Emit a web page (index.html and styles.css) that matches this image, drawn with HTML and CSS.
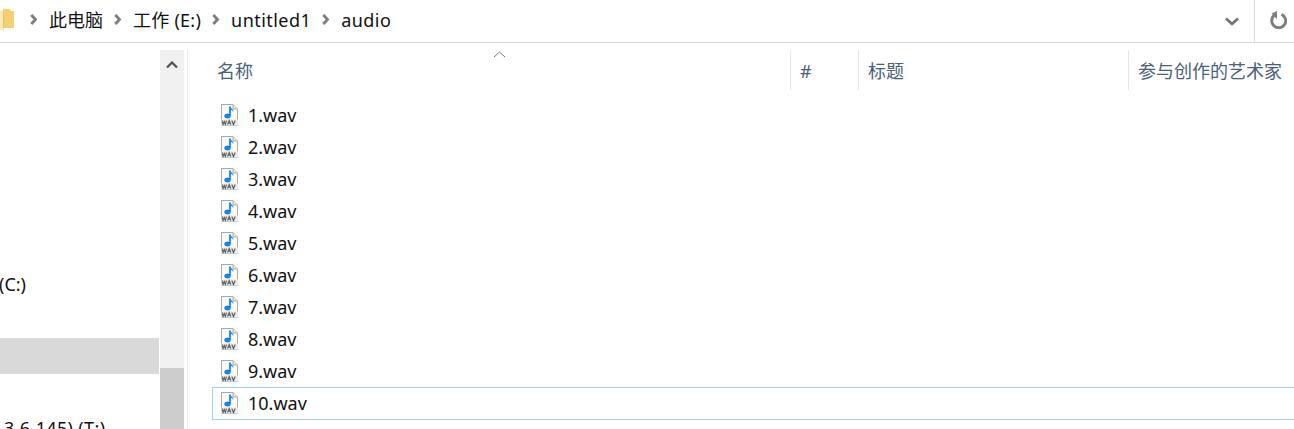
FILE: index.html
```html
<!DOCTYPE html>
<html lang="zh">
<head>
<meta charset="utf-8">
<title>audio</title>
<link rel="stylesheet" href="styles.css">
</head>
<body>
<div class="window">
  <header class="addressbar">
    <svg class="folder" width="15" height="24" viewBox="0 0 15 24"><path d="M3 1h7l1 2h3v17H3z" fill="#f4d072"/><path d="M0 1.500l4 1.500v20l-4-1z" fill="#fdebb5"/><path d="M4 3l-1 .5V20h1z" fill="#e9c261"/></svg>
    <nav class="crumbs">
      <svg class="sep" width="8" height="11" viewBox="0 0 8 11"><path d="M1.300 1l4.200 4.500-4.200 4.500" fill="none" stroke="#7d7d7d" stroke-width="2.800"/></svg>
      <span class="crumb">此电脑</span>
      <svg class="sep" width="8" height="11" viewBox="0 0 8 11"><path d="M1.300 1l4.200 4.500-4.200 4.500" fill="none" stroke="#7d7d7d" stroke-width="2.800"/></svg>
      <span class="crumb crumb-drive">工作 (E:)</span>
      <svg class="sep" width="8" height="11" viewBox="0 0 8 11"><path d="M1.300 1l4.200 4.500-4.200 4.500" fill="none" stroke="#7d7d7d" stroke-width="2.800"/></svg>
      <span class="crumb crumb-latin">untitled1</span>
      <svg class="sep" width="8" height="11" viewBox="0 0 8 11"><path d="M1.300 1l4.200 4.500-4.200 4.500" fill="none" stroke="#7d7d7d" stroke-width="2.800"/></svg>
      <span class="crumb crumb-latin">audio</span>
    </nav>
    <div class="dropdown"><svg width="14" height="9" viewBox="0 0 14 9"><path d="M1 1.500l6 5.500 6-5.500" fill="none" stroke="#737373" stroke-width="2.600"/></svg></div>
    <div class="refresh"><svg width="18" height="18" viewBox="0 0 18 18"><path d="M6 3.800A7 7 0 1 0 12.500 3.300" fill="none" stroke="#7f7f7f" stroke-width="3"/><path d="M8 0v8L2.500 2.500z" fill="#7f7f7f"/></svg></div>
  </header>
  <div class="body">
    <aside class="sidebar">
      <div class="tree">
        <div class="tree-row tree-drive">(C:)</div>
        <div class="tree-row"></div>
        <div class="tree-row selected"></div>
        <div class="tree-row"></div>
        <div class="tree-row tree-net">3.6.145) (T:)</div>
      </div>
      <div class="scrollbar">
        <div class="track"><svg class="up" width="12" height="8" viewBox="0 0 12 8"><path d="M1 6.500l5-5 5 5" fill="none" stroke="#505050" stroke-width="2.200"/></svg></div>
        <div class="thumb"></div>
      </div>
    </aside>
    <main class="content">
      <div class="columns">
        <div class="col col-name">名称<svg class="sort" width="13" height="7" viewBox="0 0 13 7"><path d="M1 6l5.500-5 5.500 5" fill="none" stroke="#777"/></svg></div>
        <div class="col col-num">#</div>
        <div class="col col-title">标题</div>
        <div class="col col-artist">参与创作的艺术家</div>
      </div>
      <svg width="0" height="0" class="defs"><defs><g id="wav">
        <path d="M1.500.5h11.500l4.500 4.500v16.500h-16z" fill="#fbfbfb" stroke="#a8a8a8"/>
        <path d="M13 .5v4.500h4.500" fill="#e6e6e6" stroke="#a8a8a8"/>
        <path d="M10 2.500v9.500" stroke="#1a84da" stroke-width="1.800"/>
        <path d="M10.500 2.500c.5 2.200 3.200 2.600 3 5.800-.7-1.800-2-2.400-3-2.600z" fill="#1a84da"/>
        <ellipse cx="7.500" cy="12" rx="3.200" ry="2.500" fill="#1a84da"/>
        <rect x="1" y="15.200" width="17" height="6.300" fill="#ececec"/>
        <path d="M2 16.500l1 4 1.200-3 1.200 3 1-4M7.500 20.500l1.700-4 1.700 4M8.200 19.300h2M11.800 16.500l1.700 4 1.700-4" fill="none" stroke="#5c5c5c" stroke-width="1.100"/>
      </g></defs></svg>
      <ul class="files">
        <li class="file"><svg width="19" height="22" viewBox="0 0 19 22"><use href="#wav"/></svg><span>1.wav</span></li>
        <li class="file"><svg width="19" height="22" viewBox="0 0 19 22"><use href="#wav"/></svg><span>2.wav</span></li>
        <li class="file"><svg width="19" height="22" viewBox="0 0 19 22"><use href="#wav"/></svg><span>3.wav</span></li>
        <li class="file"><svg width="19" height="22" viewBox="0 0 19 22"><use href="#wav"/></svg><span>4.wav</span></li>
        <li class="file"><svg width="19" height="22" viewBox="0 0 19 22"><use href="#wav"/></svg><span>5.wav</span></li>
        <li class="file"><svg width="19" height="22" viewBox="0 0 19 22"><use href="#wav"/></svg><span>6.wav</span></li>
        <li class="file"><svg width="19" height="22" viewBox="0 0 19 22"><use href="#wav"/></svg><span>7.wav</span></li>
        <li class="file"><svg width="19" height="22" viewBox="0 0 19 22"><use href="#wav"/></svg><span>8.wav</span></li>
        <li class="file"><svg width="19" height="22" viewBox="0 0 19 22"><use href="#wav"/></svg><span>9.wav</span></li>
        <li class="file focused"><svg width="19" height="22" viewBox="0 0 19 22"><use href="#wav"/></svg><span>10.wav</span></li>
      </ul>
    </main>
  </div>
</div>
</body>
</html>
```
FILE: styles.css
```css
* { box-sizing: border-box; }
html, body { margin: 0; padding: 0; height: 100%; background: #fff; overflow: hidden; }
body { font-family: "Noto Sans", "Noto Sans CJK SC", sans-serif; font-size: 18px; color: #111; }
.window { width: 1294px; height: 429px; display: flex; flex-direction: column; overflow: hidden; }
.addressbar { flex: 0 0 43px; display: flex; align-items: center; border-bottom: 1px solid #d9d9d9; }
.folder { flex: none; margin-top: -3px; }
.crumbs { flex: 1; display: flex; align-items: center; padding: 0 0 3px 15px; }
.crumb { line-height: 38px; white-space: nowrap; }
.crumb-drive { letter-spacing: .25px; }
.crumb-latin { letter-spacing: .45px; }
.sep { margin: 0 11px; flex: none; }
.sep:first-child { margin-left: 0; }
.dropdown { width: 46px; height: 42px; display: flex; align-items: center; justify-content: center; border-right: 1px solid #d9d9d9; }
.refresh { width: 39px; height: 42px; display: flex; align-items: center; justify-content: center; padding: 0 0 3px 7px; }
.body { flex: 1; display: flex; min-height: 0; }
.sidebar { flex: 0 0 188px; display: flex; border-right: 1px solid #eeeeee; margin-top: 7px; }
.tree { flex: 0 0 160px; padding-top: 216px; }
.tree-row { height: 36px; line-height: 36px; white-space: nowrap; margin-right: 1px; }
.tree-row.selected { background: #d9d9d9; }
.tree-drive { text-indent: -1px; }
.tree-net { padding-left: 4px; letter-spacing: .35px; }
.scrollbar { flex: 0 0 24px; display: flex; flex-direction: column; background: #f0f0f0; }
.track { flex: 0 0 318px; display: flex; justify-content: center; align-items: flex-start; padding-top: 11px; }
.thumb { flex: 1; background: #cdcdcd; }
.content { flex: 1; min-width: 0; padding-top: 7px; }
.columns { display: flex; height: 40px; color: #4c607a; line-height: 42px; }
.col { padding-left: 9px; border-right: 1px solid #e5e5e5; white-space: nowrap; overflow: hidden; }
.col-name { flex: 0 0 603px; padding-left: 29px; position: relative; }
.col-num { flex: 0 0 68px; }
.col-title { flex: 0 0 270px; }
.col-artist { flex: 1; border-right: 0; }
.sort { position: absolute; left: 305px; top: 1px; }
.defs { position: absolute; }
.files { list-style: none; margin: 9px 0 0; padding: 0 0 0 24px; }
.file { height: 32px; display: flex; align-items: center; padding-left: 7px; gap: 9px; border: 1px solid transparent; border-right: 0; }
.file.focused { height: 33px; padding-bottom: 1px; border-color: #99d1ff; }
```
